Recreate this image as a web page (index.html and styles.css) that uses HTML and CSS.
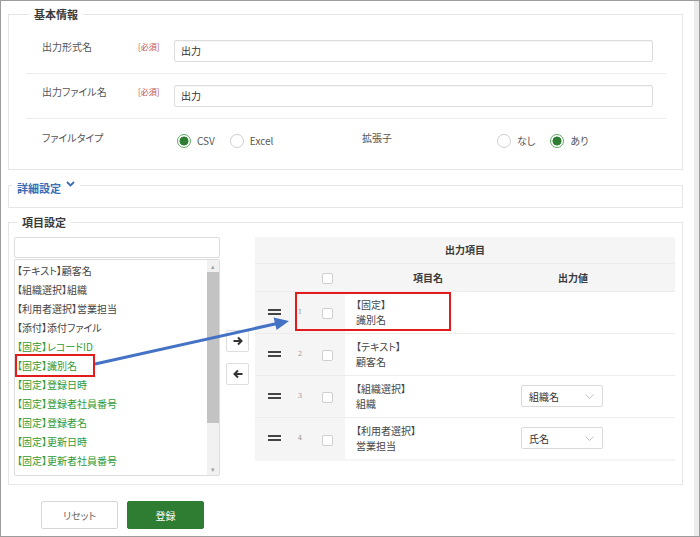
FILE: index.html
```html
<!DOCTYPE html>
<html lang="ja">
<head>
<meta charset="utf-8">
<title>出力形式の設定</title>
<link rel="stylesheet" href="styles.css">
</head>
<body>
<div class="window">
  <div class="page">
    <fieldset class="box basic">
      <legend>基本情報</legend>
      <div class="row field">
        <span class="label">出力形式名</span>
        <span class="req">[必須]</span>
        <div class="input">出力</div>
      </div>
      <div class="row field">
        <span class="label">出力ファイル名</span>
        <span class="req">[必須]</span>
        <div class="input">出力</div>
      </div>
      <div class="row split">
        <div class="half">
          <span class="label wide">ファイルタイプ</span>
          <div class="radios">
            <span class="radio on"></span><span class="opt">CSV</span>
            <span class="radio"></span><span class="opt">Excel</span>
          </div>
        </div>
        <div class="half">
          <span class="label wide">拡張子</span>
          <div class="radios">
            <span class="radio"></span><span class="opt">なし</span>
            <span class="radio on"></span><span class="opt">あり</span>
          </div>
        </div>
      </div>
    </fieldset>

    <fieldset class="box detail">
      <legend>詳細設定 <svg class="chev" width="9" height="6" viewBox="0 0 9 6"><path d="M1 1l3.5 3.5L8 1" fill="none" stroke="#3b6db3" stroke-width="1.8"/></svg></legend>
    </fieldset>

    <fieldset class="box items">
      <legend>項目設定</legend>
      <div class="items-body">
        <div class="picker">
          <div class="search"></div>
          <div class="list">
            <ul class="entries">
              <li>【テキスト】顧客名</li>
              <li>【組織選択】組織</li>
              <li>【利用者選択】営業担当</li>
              <li>【添付】添付ファイル</li>
              <li class="fixed">【固定】レコードID</li>
              <li class="fixed">【固定】識別名</li>
              <li class="fixed">【固定】登録日時</li>
              <li class="fixed">【固定】登録者社員番号</li>
              <li class="fixed">【固定】登録者名</li>
              <li class="fixed">【固定】更新日時</li>
              <li class="fixed">【固定】更新者社員番号</li>
            </ul>
            <div class="sbar">
              <span class="sbtn">&#9652;</span>
              <div class="strack"><div class="sthumb"></div></div>
              <span class="sbtn">&#9662;</span>
            </div>
          </div>
        </div>

        <div class="movers">
          <button class="move" type="button"><svg width="10" height="10" viewBox="0 0 10 10"><path d="M0.5 5h8M5 1.5 8.5 5 5 8.5" fill="none" stroke="#333" stroke-width="2"/></svg></button>
          <button class="move" type="button"><svg width="10" height="10" viewBox="0 0 10 10"><path d="M9.5 5h-8M5 1.5 1.5 5 5 8.5" fill="none" stroke="#333" stroke-width="2"/></svg></button>
        </div>

        <div class="out">
          <table class="out-table">
            <colgroup>
              <col class="c-drag"><col class="c-num"><col class="c-chk"><col class="c-name"><col class="c-val"><col class="c-end">
            </colgroup>
            <thead>
              <tr class="cap"><th colspan="6">出力項目</th></tr>
              <tr class="heads"><th></th><th></th><th><span class="check"></span></th><th>項目名</th><th>出力値</th><th></th></tr>
            </thead>
            <tbody>
              <tr>
                <td class="drag"><svg width="13" height="6" viewBox="0 0 13 6"><rect width="13" height="2" fill="#444"/><rect y="4" width="13" height="2" fill="#444"/></svg></td>
                <td class="num">1</td>
                <td class="chk"><span class="check"></span></td>
                <td class="name">【固定】<br>識別名</td>
                <td class="val"></td>
                <td class="end"></td>
              </tr>
              <tr>
                <td class="drag"><svg width="13" height="6" viewBox="0 0 13 6"><rect width="13" height="2" fill="#444"/><rect y="4" width="13" height="2" fill="#444"/></svg></td>
                <td class="num">2</td>
                <td class="chk"><span class="check"></span></td>
                <td class="name">【テキスト】<br>顧客名</td>
                <td class="val"></td>
                <td class="end"></td>
              </tr>
              <tr>
                <td class="drag"><svg width="13" height="6" viewBox="0 0 13 6"><rect width="13" height="2" fill="#444"/><rect y="4" width="13" height="2" fill="#444"/></svg></td>
                <td class="num">3</td>
                <td class="chk"><span class="check"></span></td>
                <td class="name">【組織選択】<br>組織</td>
                <td class="val"><div class="select">組織名<svg width="9" height="5" viewBox="0 0 9 5"><path d="M0.5 0.5 4.5 4.5 8.5 0.5" fill="none" stroke="#c4c4c4" stroke-width="1"/></svg></div></td>
                <td class="end"></td>
              </tr>
              <tr>
                <td class="drag"><svg width="13" height="6" viewBox="0 0 13 6"><rect width="13" height="2" fill="#444"/><rect y="4" width="13" height="2" fill="#444"/></svg></td>
                <td class="num">4</td>
                <td class="chk"><span class="check"></span></td>
                <td class="name">【利用者選択】<br>営業担当</td>
                <td class="val"><div class="select">氏名<svg width="9" height="5" viewBox="0 0 9 5"><path d="M0.5 0.5 4.5 4.5 8.5 0.5" fill="none" stroke="#c4c4c4" stroke-width="1"/></svg></div></td>
                <td class="end"></td>
              </tr>
            </tbody>
          </table>
        </div>
      </div>
    </fieldset>

    <div class="actions">
      <button class="btn reset" type="button">リセット</button>
      <button class="btn submit" type="button">登録</button>
    </div>
  </div>
  <div class="vscroll"></div>

  <!-- callout: the picked list entry and where it lands in the output table -->
  <svg class="callout" width="700" height="537" viewBox="0 0 700 537">
    <rect x="16" y="355" width="78" height="21" fill="none" stroke="#e41b1b" stroke-width="2"/>
    <rect x="296" y="293" width="154" height="37" fill="none" stroke="#e41b1b" stroke-width="2"/>
    <line x1="95" y1="364" x2="277" y2="323.5" stroke="#4472c4" stroke-width="3"/>
    <polygon points="289,321 276.6,330 273.6,317.6" fill="#4472c4"/>
  </svg>
</div>
</body>
</html>
```

FILE: styles.css
```css
* {
  box-sizing: border-box;
}

body {
  margin: 0;
  font-family: "Noto Sans CJK JP", "Noto Sans", sans-serif;
  font-size: 10px;
  color: #444;
  font-feature-settings: "palt";
}

.window {
  position: relative;
  display: flex;
  width: 700px;
  height: 537px;
  border: 1px solid #9c9c9c;
  background: #fff;
  overflow: hidden;
}

.page {
  flex: 1;
  padding: 6px 11px 0 7px;
}

.vscroll {
  width: 6px;
  background: #ececec;
}

/* fieldset frames */
.box {
  margin: 0;
  padding: 0;
  min-width: 0;
  border: 1px solid #e6e6e6;
}

.box legend {
  margin-left: 3px;
  padding: 0 5px;
  font-size: 11px;
  font-weight: bold;
  line-height: 14px;
  color: #3a3a3a;
}

.basic {
  padding: 8px 16px 0 17px;
}

.row {
  border-bottom: 1px solid #ececec;
}

.field {
  display: grid;
  grid-template-columns: 112px 36px 479px;
  align-items: start;
  padding: 11px 0;
}

.label {
  padding-left: 16px;
  line-height: 14px;
  color: #555;
}

.req {
  font-size: 8px;
  line-height: 14px;
  color: #c0504d;
}

.input {
  height: 22px;
  padding-left: 6px;
  border: 1px solid #dcdcdc;
  border-radius: 2px;
  line-height: 20px;
  color: #333;
  box-shadow: inset 0 1px 1px rgba(0, 0, 0, 0.04);
}

.split {
  display: grid;
  grid-template-columns: 320px 320px;
  padding: 12px 0 21px;
  border-bottom: 0;
}

.half {
  display: flex;
  align-items: flex-start;
}

.label.wide {
  width: 151px;
  flex: none;
}

.radios {
  display: flex;
  align-items: center;
  margin-top: 3px;
}

.radio {
  width: 14px;
  height: 14px;
  border: 1px solid #cfcfcf;
  border-radius: 50%;
  background: #fff;
}

.radio.on {
  border-color: #5fa863;
  background: radial-gradient(circle at center, #2e7d32 0, #2e7d32 4.2px, #fff 4.8px);
}

.opt {
  margin: 0 15px 0 6px;
  line-height: 14px;
  color: #555;
}

/* collapsible section */
.detail {
  margin-top: 5px;
  padding-bottom: 12px;
}

.detail legend {
  padding-top: 6px;
  color: #3b6db3;
}

.chev {
  vertical-align: top;
  margin-left: 2px;
}

/* item picker */
.items {
  margin-top: 7px;
  padding: 8px 5px 8px 5px;
}

.items-body {
  display: flex;
  align-items: flex-start;
}

.picker {
  width: 206px;
  flex: none;
}

.search {
  height: 21px;
  margin-bottom: 1px;
  border: 1px solid #dcdcdc;
  border-radius: 2px;
}

.list {
  display: flex;
  height: 217px;
  border: 1px solid #dcdcdc;
  border-radius: 2px;
  overflow: hidden;
}

.entries {
  flex: 1;
  margin: 0;
  padding: 1px 0 0 2px;
  list-style: none;
}

.entries li {
  line-height: 19px;
  color: #444;
  white-space: nowrap;
}

.entries li.fixed {
  color: #2f9a34;
}

.sbar {
  display: flex;
  flex-direction: column;
  width: 12px;
  background: #f1f1f1;
}

.sbtn {
  height: 12px;
  font-size: 7px;
  line-height: 12px;
  text-align: center;
  color: #a3a3a3;
}

.strack {
  flex: 1;
}

.sthumb {
  height: 151px;
  background: #c3c3c3;
}

.movers {
  display: flex;
  flex-direction: column;
  gap: 11px;
  width: 35px;
  flex: none;
  padding: 93px 0 0 6px;
}

.move {
  display: flex;
  align-items: center;
  justify-content: center;
  width: 23px;
  height: 22px;
  padding: 0;
  border: 1px solid #dedede;
  border-radius: 2px;
  background: #fff;
}

/* output table */
.out {
  width: 420px;
  height: 224px;
  flex: none;
  background: #f6f5f5;
}

.out-table {
  width: 420px;
  border-collapse: collapse;
  table-layout: fixed;
}

.c-drag { width: 35px; }
.c-num { width: 20px; }
.c-chk { width: 35px; }
.c-name { width: 166px; }
.c-val { width: 124px; }
.c-end { width: 40px; }

.out-table th {
  padding: 0;
  font-weight: bold;
  text-align: center;
  color: #3a3a3a;
}

.cap th {
  height: 26px;
  border-bottom: 1px solid #ececec;
}

.heads th {
  height: 28px;
}

.out-table td {
  height: 42px;
  padding: 0;
  border-top: 1px solid #ececec;
}

.check {
  display: inline-block;
  width: 11px;
  height: 11px;
  border: 1px solid #cfcfcf;
  border-radius: 2px;
  background: #fff;
  vertical-align: middle;
}

td.drag {
  padding-left: 13px;
}

td.drag svg {
  display: block;
}

td.num {
  font-family: "DejaVu Serif", serif;
  font-size: 7px;
  color: #999;
  text-align: center;
}

td.chk {
  text-align: center;
}

td.name,
td.val,
td.end {
  background: #fff;
}

td.name {
  padding-left: 11px;
  line-height: 15px;
  color: #444;
}

td.val {
  padding-left: 10px;
}

.select {
  display: flex;
  align-items: center;
  justify-content: space-between;
  width: 82px;
  height: 22px;
  padding: 0 8px 0 7px;
  border: 1px solid #dadada;
  border-radius: 2px;
  color: #333;
  background: #fff;
}

/* form actions */
.actions {
  display: flex;
  gap: 9px;
  margin: 16px 0 0 33px;
}

.btn {
  width: 77px;
  height: 28px;
  padding: 0;
  border-radius: 2px;
  font-family: inherit;
  font-size: 10px;
  font-feature-settings: "palt";
}

.reset {
  border: 1px solid #d6d6d6;
  background: #fff;
  color: #666;
}

.submit {
  border: 1px solid #2e7d32;
  background: #2e7d32;
  color: #fff;
}

.callout {
  position: absolute;
  left: -1px;
  top: -1px;
  pointer-events: none;
}
```
